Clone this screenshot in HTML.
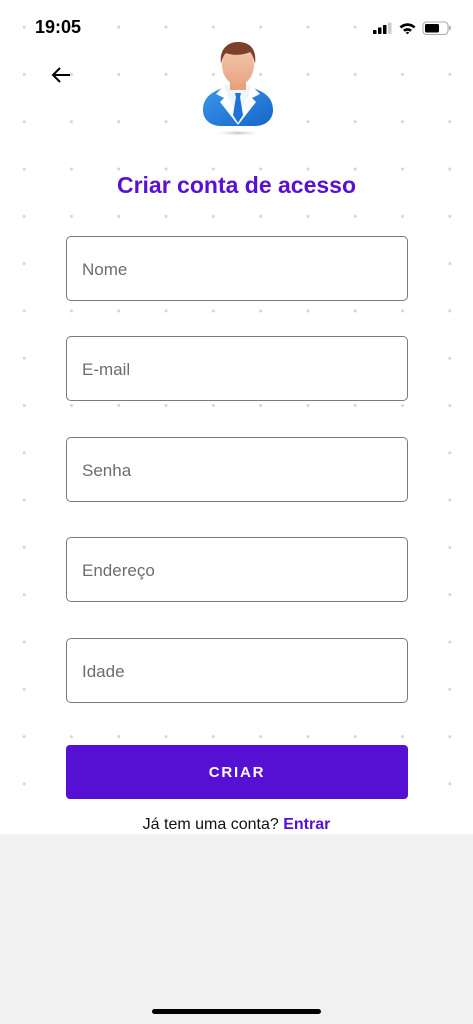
<!DOCTYPE html>
<html><head><meta charset="utf-8"><style>
*{margin:0;padding:0;box-sizing:border-box}
body{width:473px;height:1024px;position:relative;overflow:hidden;background:#fff;font-family:"Liberation Sans",sans-serif}
.dots{position:absolute;left:0;top:0;width:473px;height:810px;background-image:radial-gradient(circle,#d4d4d4 1.3px,transparent 1.7px);background-size:47.3px 47.3px;background-position:0.5px 3.5px}
.gray{position:absolute;left:0;top:834px;width:473px;height:190px;background:#f1f1f1}
.field{position:absolute;left:66px;width:342px;height:65px;border:1px solid #7a7a7a;border-radius:5px;background:#fff;font-size:17px;color:#6d6d6d;padding-left:15px;line-height:65px}
.btn{position:absolute;left:66px;top:745px;width:342px;height:54px;background:#5510d4;border-radius:4px;color:#fff;font-weight:bold;font-size:15px;letter-spacing:1.8px;text-align:center;line-height:56px}
</style></head><body>
<div class="dots"></div>
<div class="gray"></div>
<div style="position:absolute;left:35px;top:17px;font-size:18px;font-weight:bold;color:#000">19:05</div>
<svg style="position:absolute;left:372px;top:20px" width="82" height="16" viewBox="0 0 82 16">
<rect x="1" y="10" width="3.5" height="4" rx="0.5"/><rect x="6" y="7.5" width="3.5" height="6.5" rx="0.5"/><rect x="11" y="5" width="3.5" height="9" rx="0.5"/><rect x="16" y="2.5" width="3.5" height="11.5" rx="0.5" fill="#ccc"/>
<path d="M27.5 6.5a11.5 11.5 0 0 1 16 0l-1.9 1.9a8.8 8.8 0 0 0-12.2 0z M31 9.9a6.6 6.6 0 0 1 9 0l-1.9 1.9a4 4 0 0 0-5.2 0z M33.8 12.6a2.4 2.4 0 0 1 3.4 0l-1.7 1.8z"/>
<rect x="51" y="2" width="25" height="12.5" rx="3.5" fill="none" stroke="#aaa" stroke-width="1"/><rect x="53" y="4" width="14" height="8.5" rx="1.5"/><rect x="77" y="6.3" width="1.6" height="4" rx="0.7" fill="#aaa"/>
</svg>
<svg style="position:absolute;left:50px;top:65px" width="22" height="20" viewBox="0 0 22 20"><path d="M20 10H3M10 3L3 10l7 7" fill="none" stroke="#000" stroke-width="2"/></svg>
<svg style="position:absolute;left:200px;top:38px" width="76" height="100" viewBox="0 0 76 100">
<defs><linearGradient id="s" x1="0" y1="0" x2="0" y2="1"><stop offset="0" stop-color="#f6c9ae"/><stop offset="1" stop-color="#e8a583"/></linearGradient>
<linearGradient id="b" x1="0" y1="0" x2="1" y2="1"><stop offset="0" stop-color="#3c96ea"/><stop offset="1" stop-color="#1666c8"/></linearGradient>
<radialGradient id="sh"><stop offset="0" stop-color="#bbb"/><stop offset="1" stop-color="#fff" stop-opacity="0"/></radialGradient></defs>
<ellipse cx="38" cy="95" rx="26" ry="3" fill="url(#sh)"/>
<path d="M3 72c0-12 8-18 20-22l15 37 15-37c12 4 20 10 20 22 0 10-8 16-18 16H21C11 88 3 82 3 72z" fill="url(#b)"/>
<path d="M25 47h26l-2 10-11 20-11-20z" fill="#eef4fb"/>
<path d="M24 48l-8 8 8 4-4 4 18 23z M52 48l8 8-8 4 4 4-18 23z" fill="#fff"/>
<path d="M35 55h6l-1 4 3 18-5 8-5-8 3-18z" fill="#1f72d6"/>
<rect x="30" y="38" width="16" height="14" fill="#e6a27f"/>
<ellipse cx="38" cy="27" rx="16" ry="20" fill="url(#s)"/>
<path d="M21 26c-2-14 6-22 17-22s19 6 17 22c-1-5-3-10-5-12-6 3-16 4-24 1-3 3-4 7-5 11z" fill="#7b3f2a"/>
</svg>
<div style="position:absolute;left:0;width:473px;top:172px;text-align:center;color:#5a10d0;font-size:23px;font-weight:bold">Criar conta de acesso</div>
<div class="field" style="top:236px">Nome</div>
<div class="field" style="top:336px">E-mail</div>
<div class="field" style="top:437px">Senha</div>
<div class="field" style="top:537px">Endereço</div>
<div class="field" style="top:638px">Idade</div>
<div class="btn">CRIAR</div>
<div style="position:absolute;left:0;width:473px;top:816px;text-align:center;font-size:16px;color:#111">Já tem uma conta? <b style="color:#5510d4">Entrar</b></div>
<div style="position:absolute;left:152px;top:1009px;width:169px;height:5px;border-radius:3px;background:#000"></div>
</body></html>
